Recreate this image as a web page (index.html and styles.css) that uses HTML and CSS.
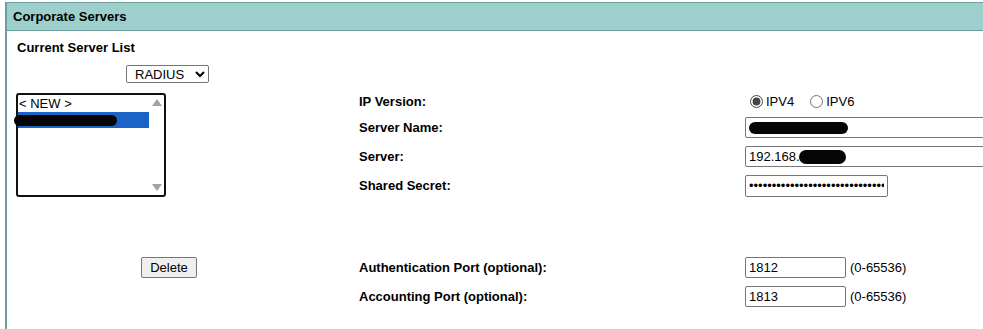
FILE: index.html
```html
<!DOCTYPE html>
<html>
<head>
<meta charset="utf-8">
<title>Corporate Servers</title>
<link rel="stylesheet" href="styles.css">
</head>
<body>
<div class="panel">
  <div class="panel-head">Corporate Servers</div>
  <div class="panel-body">
    <div class="left">
      <div class="list-title">Current Server List</div>
      <div class="type-wrap">
        <select class="type"><option>RADIUS</option></select>
      </div>
      <div class="listbox">
        <div class="items">
          <div class="item">&lt; NEW &gt;</div>
          <div class="item selected"><span class="redact redact-item"></span></div>
        </div>
        <div class="scroll">
          <span class="arrow up"></span>
          <span class="arrow down"></span>
        </div>
      </div>
      <div class="delete-wrap"><button class="btn" type="button">Delete</button></div>
    </div>
    <div class="form">
      <div class="row r-ip">
        <div class="lbl">IP Version:</div>
        <div class="ctl">
          <label class="radio"><input type="radio" name="ipv" checked>IPV4</label>
          <label class="radio"><input type="radio" name="ipv">IPV6</label>
        </div>
      </div>
      <div class="row">
        <div class="lbl">Server Name:</div>
        <div class="ctl"><div class="field wide"><span class="redact redact-name"></span></div></div>
      </div>
      <div class="row">
        <div class="lbl">Server:</div>
        <div class="ctl"><div class="field wide">192.168.<span class="redact redact-ip"></span></div></div>
      </div>
      <div class="row">
        <div class="lbl">Shared Secret:</div>
        <div class="ctl"><input class="field secret" type="password" value="xxxxxxxxxxxxxxxxxxxxxxxxxxxxxx"></div>
      </div>
      <div class="spacer"></div>
      <div class="row">
        <div class="lbl">Authentication Port (optional):</div>
        <div class="ctl"><input class="field port" type="text" value="1812"><span class="hint">(0-65536)</span></div>
      </div>
      <div class="row">
        <div class="lbl">Accounting Port (optional):</div>
        <div class="ctl"><input class="field port" type="text" value="1813"><span class="hint">(0-65536)</span></div>
      </div>
    </div>
  </div>
</div>
</body>
</html>
```
FILE: styles.css
```css
html, body {
  margin: 0;
  padding: 0;
  background: #ffffff;
  font-family: "Liberation Sans", Arial, sans-serif;
  color: #000;
  overflow: hidden;
}

.panel {
  margin-top: 2px;
  margin-left: 5px;
  border-left: 2px solid #6f9c9c;
  height: 340px;
}

.panel-head {
  background: #9dcfcc;
  border-top: 1px solid #6f9c9c;
  border-bottom: 1px solid #6f9c9c;
  height: 27px;
  line-height: 27px;
  padding-left: 6px;
  font-size: 13px;
  font-weight: bold;
}

.panel-body {
  display: flex;
  align-items: flex-start;
}

.left {
  width: 352px;
  flex: none;
  padding-top: 9px;
}

.list-title {
  font-size: 13px;
  font-weight: bold;
  line-height: 16px;
  padding-left: 10px;
}

.type-wrap {
  margin-top: 9px;
  padding-left: 119px;
  height: 18px;
}

.type {
  width: 83px;
  height: 18px;
  font-family: "Liberation Sans", Arial, sans-serif;
  font-size: 13px;
  border: 1px solid #767676;
  border-radius: 2px;
  background: #fff;
  padding: 0 0 0 4px;
  color: #000;
}

.listbox {
  margin-top: 10px;
  margin-left: 9px;
  width: 146px;
  height: 100px;
  border: 2px solid #111;
  border-radius: 3px;
  display: flex;
  background: #fff;
}

.items {
  flex: 1;
  padding-top: 1px;
}

.item {
  font-size: 13px;
  line-height: 16px;
  height: 16px;
  padding-left: 1px;
  white-space: nowrap;
}

.item.selected {
  background: #1a64c8;
  position: relative;
}

.redact {
  display: inline-block;
  background: #050505;
  border-radius: 7px;
}

.redact-item {
  position: absolute;
  left: -4px;
  top: 3px;
  width: 103px;
  height: 11px;
}

.scroll {
  width: 15px;
  display: flex;
  flex-direction: column;
  justify-content: space-between;
  align-items: center;
  padding: 4px 0 4px;
}

.arrow {
  width: 0;
  height: 0;
  border-left: 5px solid transparent;
  border-right: 5px solid transparent;
}

.arrow.up {
  border-bottom: 7px solid #a3a3a3;
}

.arrow.down {
  border-top: 7px solid #a3a3a3;
}

.delete-wrap {
  margin-top: 60px;
  padding-left: 134px;
}

.btn {
  width: 56px;
  height: 21px;
  font-family: "Liberation Sans", Arial, sans-serif;
  font-size: 13px;
  background: #efefef;
  border: 1px solid #767676;
  border-radius: 2px;
  padding: 0;
  color: #000;
}

.form {
  flex: 1;
  padding-top: 58px;
  display: grid;
  grid-template-columns: 386px 1fr;
}

.row {
  display: contents;
}

.lbl,
.ctl {
  height: 29px;
  display: flex;
  align-items: center;
}

.r-ip .lbl,
.r-ip .ctl {
  height: 24px;
}

.lbl {
  font-size: 13px;
  font-weight: bold;
}

.ctl {
  font-size: 13px;
  white-space: nowrap;
}

.spacer {
  grid-column: 1 / -1;
  height: 53px;
}

.radio {
  display: inline-flex;
  align-items: center;
  margin-right: 11px;
  font-size: 13px;
}

.radio input {
  margin: 0 3px 0 5px;
  width: 13px;
  height: 13px;
  accent-color: #444;
}

.field {
  box-sizing: border-box;
  height: 21px;
  border: 1px solid #767676;
  border-radius: 2px;
  font-family: "Liberation Sans", Arial, sans-serif;
  font-size: 13px;
  padding: 0 3px;
  background: #fff;
  color: #000;
  display: inline-flex;
  align-items: center;
}

.wide {
  width: 260px;
}

.redact-name {
  width: 99px;
  height: 12px;
}

.redact-ip {
  width: 47px;
  height: 14px;
  margin-left: -1px;
}

.secret {
  width: 143px;
  height: 22px;
  letter-spacing: 0;
}

.port {
  width: 101px;
}

.hint {
  margin-left: 4px;
}
```
